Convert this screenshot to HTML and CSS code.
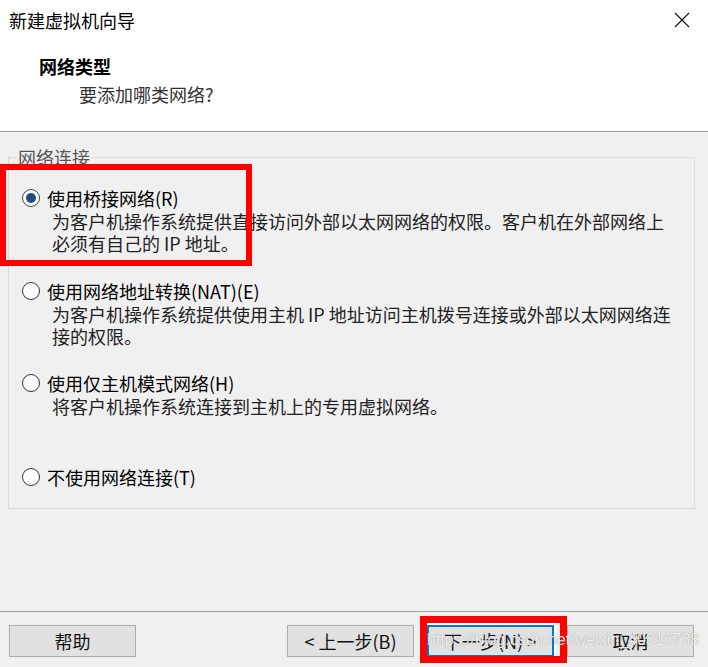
FILE: index.html
```html
<!DOCTYPE html>
<html lang="zh-CN">
<head>
<meta charset="utf-8">
<title>新建虚拟机向导</title>
<link rel="stylesheet" href="styles.css">
</head>
<body>
<div class="window">
  <header class="header">
    <div class="titlebar">
      <span class="title">新建虚拟机向导</span>
      <svg class="close" width="16" height="16" viewBox="0 0 16 16"><path d="M1 1 L15 15 M15 1 L1 15" stroke="#111" stroke-width="1.1" fill="none"/></svg>
    </div>
    <div class="heading">网络类型</div>
    <div class="subheading">要添加哪类网络?</div>
  </header>
  <main class="content">
    <div class="group">
      <span class="legend">网络连接</span>
      <div class="opt">
        <div class="opt-row"><span class="radio checked"></span><span class="label">使用桥接网络(R)</span></div>
        <div class="desc">为客户机操作系统提供直接访问外部以太网网络的权限。客户机在外部网络上<br>必须有自己的 IP 地址。</div>
      </div>
      <div class="opt opt-second">
        <div class="opt-row"><span class="radio"></span><span class="label">使用网络地址转换(NAT)(E)</span></div>
        <div class="desc">为客户机操作系统提供使用主机 IP 地址访问主机拨号连接或外部以太网网络连<br>接的权限。</div>
      </div>
      <div class="opt opt-third">
        <div class="opt-row"><span class="radio"></span><span class="label">使用仅主机模式网络(H)</span></div>
        <div class="desc">将客户机操作系统连接到主机上的专用虚拟网络。</div>
      </div>
      <div class="opt opt-last">
        <div class="opt-row"><span class="radio"></span><span class="label">不使用网络连接(T)</span></div>
      </div>
    </div>
  </main>
  <footer class="footer">
    <button class="btn">帮助</button>
    <div class="nav">
      <button class="btn">&lt; 上一步(B)</button>
      <button class="btn btn-default">下一步(N) &gt;</button>
      <button class="btn">取消</button>
    </div>
  </footer>
  <div class="mark mark-bridge"></div>
  <div class="mark mark-next"></div>
  <div class="watermark">https://blog.csdn.net/weixin_40316738</div>
</div>
</body>
</html>
```
FILE: styles.css
```css
* { box-sizing: border-box; }
html, body { margin: 0; padding: 0; }
body {
  background: #f0f0f0;
  font-family: "Noto Sans CJK SC", "Noto Sans", sans-serif;
  color: #000;
}
.window {
  position: relative;
  width: 708px;
  height: 667px;
  display: flex;
  flex-direction: column;
  overflow: hidden;
  background: #f0f0f0;
}
.header {
  height: 132px;
  background: #fff;
  border-bottom: 1px solid #a0a0a0;
  flex: none;
}
.titlebar {
  height: 40px;
  display: flex;
  align-items: center;
  justify-content: space-between;
  padding: 0 18px 0 9px;
}
.title {
  font-size: 18px;
  line-height: 24px;
  color: #000;
}
.close { display: block; }
.heading {
  margin: 14px 0 0 39px;
  font-size: 18px;
  line-height: 24px;
  font-weight: bold;
  color: #000;
}
.subheading {
  margin: 4px 0 0 79px;
  font-size: 18px;
  line-height: 24px;
  color: #333;
}
.content {
  flex: 1;
  padding: 25px 13px 0 8px;
}
.group {
  position: relative;
  border: 1px solid #dcdcdc;
  padding: 28px 0 19px 0;
}
.legend {
  position: absolute;
  top: -13px;
  left: 8px;
  padding: 0 1px;
  background: #f0f0f0;
  font-size: 18px;
  line-height: 24px;
  color: #555;
}
.opt-second { margin-top: 25px; }
.opt-third { margin-top: 24px; }
.opt-last { margin-top: 48px; }
.opt-row {
  display: flex;
  align-items: center;
  height: 24px;
  padding-left: 13px;
  gap: 7px;
}
.radio {
  width: 18px;
  height: 18px;
  border: 1px solid #333;
  border-radius: 50%;
  background: #fff;
  flex: none;
  display: flex;
  align-items: center;
  justify-content: center;
}
.radio.checked { border-color: #444; }
.radio.checked::after {
  content: "";
  width: 10px;
  height: 10px;
  border-radius: 50%;
  background: #1f4f7f;
}
.label {
  font-size: 18px;
  line-height: 24px;
  color: #000;
  white-space: nowrap;
}
.desc {
  padding-left: 43px;
  font-size: 18px;
  line-height: 22px;
  color: #222;
  white-space: nowrap;
}
.footer {
  flex: none;
  height: 56px;
  border-top: 1px solid #a0a0a0;
  display: flex;
  align-items: flex-start;
  padding: 13px 14px 0 9px;
}
.nav {
  margin-left: auto;
  display: flex;
  gap: 13px;
}
.btn {
  width: 127px;
  height: 32px;
  background: #e1e1e1;
  border: 1px solid #adadad;
  font-family: "Noto Sans CJK SC", "Noto Sans", sans-serif;
  font-size: 18px;
  line-height: 22px;
  color: #111;
  padding: 0;
  display: flex;
  align-items: center;
  justify-content: center;
  border-radius: 0;
}
.btn-default {
  border: 2px solid #0078d7;
  box-shadow: 0 0 0 2px #fff;
}
.mark {
  position: absolute;
  border: 6px solid #ff0000;
  pointer-events: none;
}
.mark-bridge {
  left: 0;
  top: 164px;
  width: 252px;
  height: 102px;
}
.mark-next {
  left: 420px;
  top: 616px;
  width: 147px;
  height: 47px;
  border-width: 7px;
}
.watermark {
  position: absolute;
  left: 427px;
  top: 630px;
  font-family: "Liberation Sans", Arial, sans-serif;
  font-size: 16px;
  line-height: 20px;
  color: rgba(255, 255, 255, 0.88);
  text-shadow: 0 0 1px rgba(90, 90, 90, 0.7);
  white-space: nowrap;
  pointer-events: none;
}
```
